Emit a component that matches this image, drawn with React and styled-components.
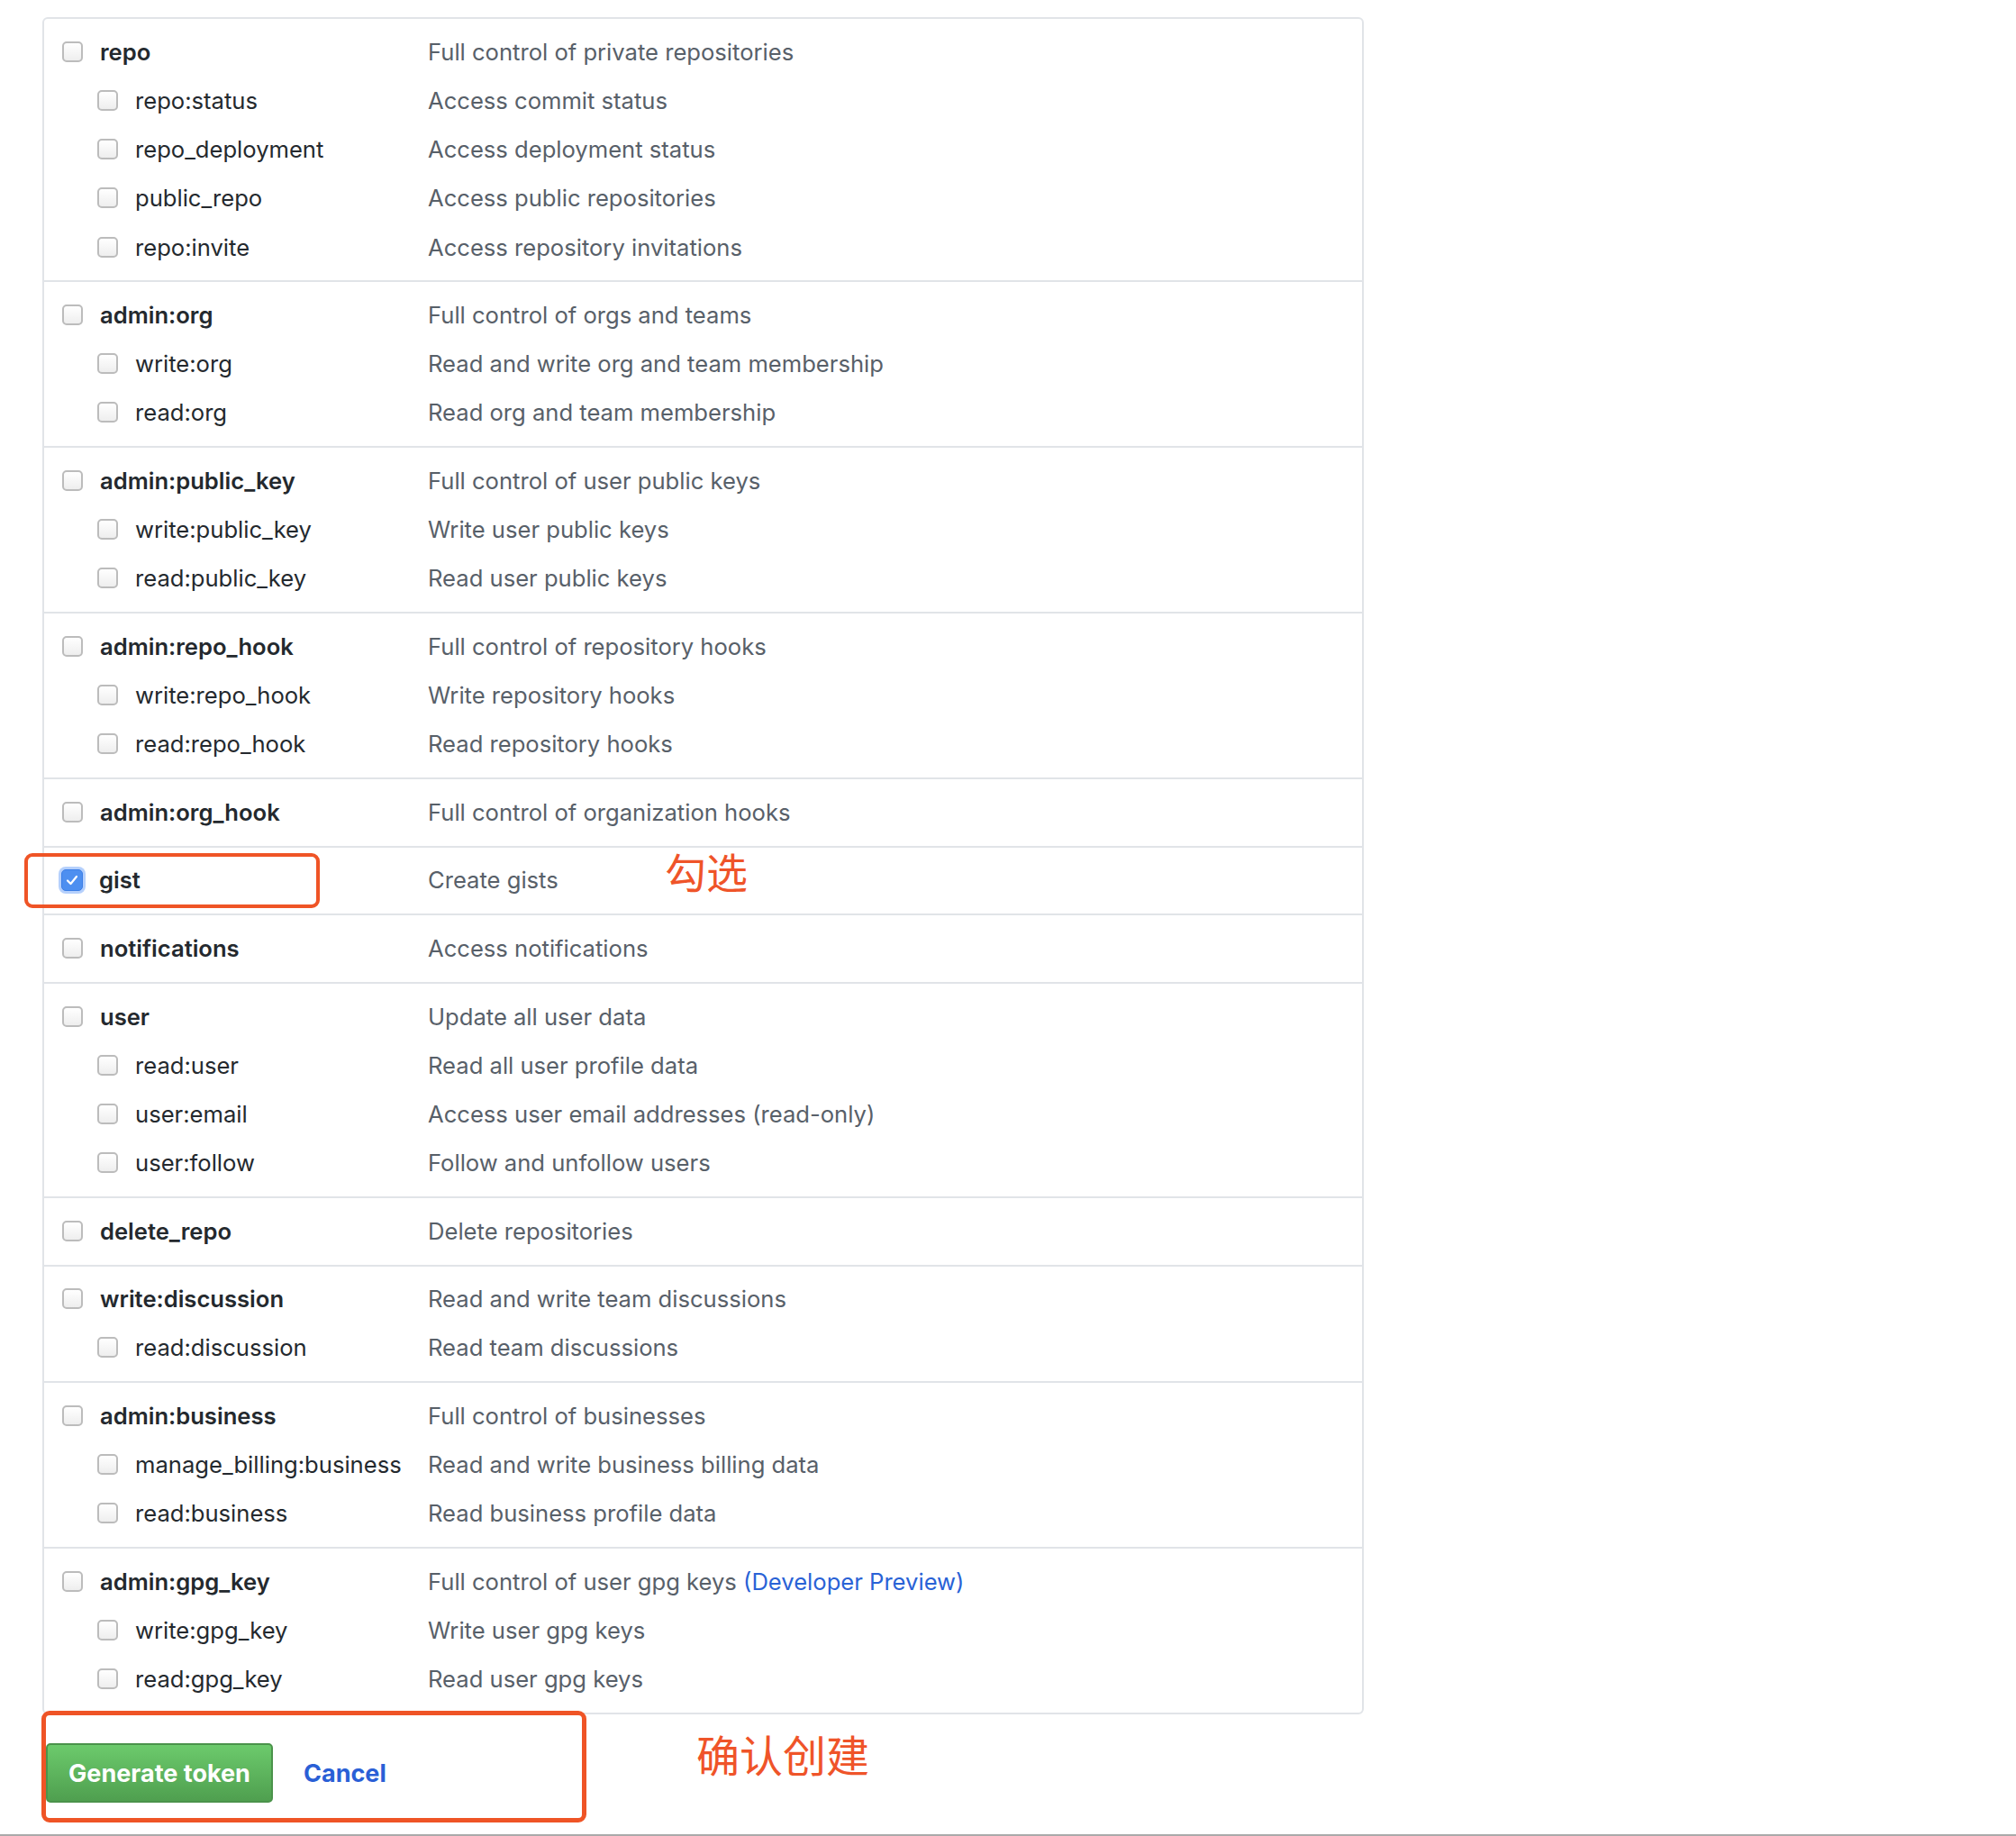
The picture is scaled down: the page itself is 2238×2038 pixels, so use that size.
import React from 'react'
import styled, { createGlobalStyle } from 'styled-components'

const GlobalStyle = createGlobalStyle`
    html, body {
        margin: 0;
        padding: 0;
        background: #fff;
    }
    body {
        font-family: Inter, "Noto Sans", "Noto Sans CJK SC", sans-serif;
        color: #24292e;
    }
`

const Page = styled.div`
    width: 2238px;
    min-height: 2038px;
    display: flex;
    flex-direction: column;
`

const Main = styled.main`
    padding: 19px 0 0 47px;
    flex: 1;
`

const Panel = styled.div`
    width: 1467px;
    box-sizing: border-box;
    border: 2px solid #e1e4e8;
    border-radius: 6px;
`

const Group = styled.div`
    padding: 9.2px 0 10.2px;
    & + & {
        border-top: 2px solid #e1e4e8;
    }
`

const Row = styled.div`
    position: relative;
    display: grid;
    grid-template-columns: 426px 1fr;
    align-items: center;
    height: 54.2px;
    font-size: 25.6px;
`

const LabelCell = styled.label`
    display: flex;
    align-items: center;
    gap: 19px;
    padding-left: ${p => (p.$sub ? 59 : 20)}px;
    font-weight: ${p => (p.$sub ? 400 : 600)};
    color: #24292e;
`

const Box = styled.span`
    flex: none;
    width: 23px;
    height: 23px;
    box-sizing: border-box;
    border-radius: 5px;
    border: 2px solid #bcbcbc;
    background: linear-gradient(#ffffff, #eeeeee);
    display: flex;
    align-items: center;
    justify-content: center;

    &.checked {
        width: 24px;
        height: 24px;
        margin: 0 -1px 0 -1px;
        border: 1.5px solid #3b7ee6;
        background: #4d8ff0;
        box-shadow: 0 0 0 3px rgba(120, 170, 250, 0.55);
    }
`

const Desc = styled.div`
    color: #586069;
    a {
        color: #2962d6;
        text-decoration: none;
    }
`

const Note = styled.span`
    position: absolute;
    font-family: "Noto Sans CJK SC", sans-serif;
    color: #ef5429;
    line-height: 1;
    white-space: nowrap;
    left: ${p => p.$left}px;
    top: ${p => p.$top}px;
    font-size: ${p => p.$size}px;
`

const Highlight = styled.div`
    position: absolute;
    box-sizing: border-box;
    border: ${p => p.$w}px solid #ef5426;
    border-radius: 9px;
    pointer-events: none;
    left: ${p => p.$left}px;
    top: ${p => p.$top}px;
    width: ${p => p.$width}px;
    height: ${p => p.$height}px;
`

const Actions = styled.div`
    position: relative;
    display: flex;
    align-items: center;
    gap: 34px;
    margin: 32px 0 0 4px;
    height: 66px;
`

const PrimaryButton = styled.button`
    height: 66px;
    width: 252px;
    box-sizing: border-box;
    border: 2px solid #4b934b;
    border-radius: 5px;
    background: linear-gradient(#6cca6c, #4f9f4f);
    color: #fff;
    font-family: inherit;
    font-size: 27px;
    font-weight: 700;
    cursor: pointer;
`

const CancelLink = styled.a`
    color: #2a5fd6;
    font-size: 27px;
    font-weight: 700;
    text-decoration: none;
`

const BottomLine = styled.div`
    height: 2px;
    background: #aaaaaa;
    margin-top: 33px;
`

const scopes = [
    [['repo', 'Full control of private repositories'],
        ['repo:status', 'Access commit status'],
        ['repo_deployment', 'Access deployment status'],
        ['public_repo', 'Access public repositories'],
        ['repo:invite', 'Access repository invitations']],
    [['admin:org', 'Full control of orgs and teams'],
        ['write:org', 'Read and write org and team membership'],
        ['read:org', 'Read org and team membership']],
    [['admin:public_key', 'Full control of user public keys'],
        ['write:public_key', 'Write user public keys'],
        ['read:public_key', 'Read user public keys']],
    [['admin:repo_hook', 'Full control of repository hooks'],
        ['write:repo_hook', 'Write repository hooks'],
        ['read:repo_hook', 'Read repository hooks']],
    [['admin:org_hook', 'Full control of organization hooks']],
    [['gist', 'Create gists']],
    [['notifications', 'Access notifications']],
    [['user', 'Update all user data'],
        ['read:user', 'Read all user profile data'],
        ['user:email', 'Access user email addresses (read-only)'],
        ['user:follow', 'Follow and unfollow users']],
    [['delete_repo', 'Delete repositories']],
    [['write:discussion', 'Read and write team discussions'],
        ['read:discussion', 'Read team discussions']],
    [['admin:business', 'Full control of businesses'],
        ['manage_billing:business', 'Read and write business billing data'],
        ['read:business', 'Read business profile data']],
    [['admin:gpg_key', 'Full control of user gpg keys'],
        ['write:gpg_key', 'Write user gpg keys'],
        ['read:gpg_key', 'Read user gpg keys']],
]

const Check = () => (
    <svg width="14" height="12" viewBox="0 0 14 12">
        <path d="M2 6.5 L5.5 10 L12 2" fill="none" stroke="#fff" strokeWidth="2.2" strokeLinecap="round" strokeLinejoin="round" />
    </svg>
)

const ScopeRow = ({ name, desc, sub }) => {
    const checked = name === 'gist'
    return (
        <Row>
            <LabelCell $sub={sub}>
                <Box className={checked ? 'checked' : ''}>{checked && <Check />}</Box>
                {name}
            </LabelCell>
            <Desc>
                {desc}
                {name === 'admin:gpg_key' && <> <a href="#">(Developer Preview)</a></>}
            </Desc>
            {checked && (
                <>
                    <Highlight $w={4} $left={-22} $top={-3} $width={328} $height={61} />
                    <Note $left={689} $top={-7} $size={46}>勾选</Note>
                </>
            )}
        </Row>
    )
}

const App = () => {
    return (
        <Page>
            <GlobalStyle />
            <Main>
                <Panel>
                    {scopes.map(group => (
                        <Group key={group[0][0]}>
                            {group.map(([name, desc], i) => (
                                <ScopeRow key={name} name={name} desc={desc} sub={i > 0} />
                            ))}
                        </Group>
                    ))}
                </Panel>
                <Actions>
                    <PrimaryButton>Generate token</PrimaryButton>
                    <CancelLink href="#">Cancel</CancelLink>
                    <Highlight $w={5} $left={-5} $top={-36} $width={605} $height={124} />
                    <Note $left={722} $top={-13} $size={48}>确认创建</Note>
                </Actions>
            </Main>
            <BottomLine />
        </Page>
    )
}

export default App
